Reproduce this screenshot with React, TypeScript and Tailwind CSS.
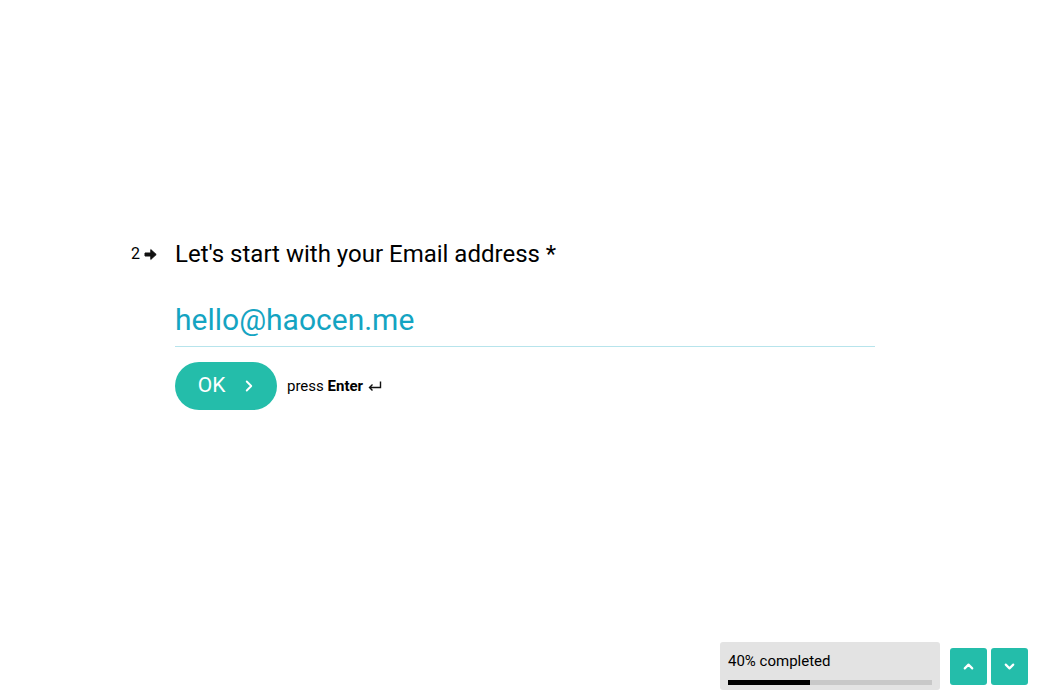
import { ChevronRight, ChevronUp, ChevronDown } from "lucide-react";

const font = { fontFamily: "Roboto, 'Liberation Sans', sans-serif" };

function ArrowRight() {
  return (
    <svg width="13" height="13" viewBox="0 0 13 13" aria-hidden="true">
      <path d="M1 5h5.8V1.6L12.2 6.5l-5.4 4.9V8H1z" fill="#111" stroke="#111" strokeWidth="1" strokeLinejoin="round" />
    </svg>
  );
}

function EnterIcon() {
  return (
    <svg width="14" height="11" viewBox="0 0 14 11" aria-hidden="true" className="ml-[5px]">
      <path d="M12.5 0.5v6H1.5M4.5 3.5l-3 3 3 3" fill="none" stroke="#111" strokeWidth="1.4" />
    </svg>
  );
}

export default function App() {
  return (
    <div className="flex h-[700px] w-full flex-col bg-white text-black" style={font}>
      <main className="flex-1 pl-[131px] pt-[240px]">
        <div className="flex items-center">
          <div className="flex w-[44px] items-center gap-[4px] text-[16px]">
            <span>2</span>
            <ArrowRight />
          </div>
          <h1 className="text-[24px] leading-[28px]">Let's start with your Email address *</h1>
        </div>

        <div className="ml-[44px] mt-[32px] w-[700px]">
          <div className="border-b border-[#b7e4ec] pb-[6px] text-[30px] leading-[40px] text-[#14a4c2]">
            hello@haocen.me
          </div>
          <div className="mt-[15px] flex items-center gap-[10px]">
            <button className="flex h-[48px] w-[102px] items-center justify-center gap-[15px] rounded-full bg-[#24bdaa] pl-[4px] text-[21px] text-white">
              OK
              <ChevronRight size={18} strokeWidth={2.5} />
            </button>
            <span className="flex items-center text-[15px]">
              press&nbsp;<b>Enter</b>
              <EnterIcon />
            </span>
          </div>
        </div>
      </main>

      <footer className="flex items-center justify-end gap-[10px] pb-[10px] pr-[22px]">
        <div className="flex h-[48px] w-[220px] flex-col justify-between rounded-[3px] bg-[#e3e3e3] px-[8px] pb-[5px] pt-[10px]">
          <span className="text-[15px] leading-[18px]">40% completed</span>
          <div className="h-[5px] w-full bg-[#c8c8c8]">
            <div className="h-full bg-black" style={{ width: "40%" }} />
          </div>
        </div>
        <div className="flex gap-[4px]">
          <button className="flex h-[37px] w-[37px] items-center justify-center rounded-[3px] bg-[#24bdaa] text-white">
            <ChevronUp size={15} strokeWidth={3.5} />
          </button>
          <button className="flex h-[37px] w-[37px] items-center justify-center rounded-[3px] bg-[#24bdaa] text-white">
            <ChevronDown size={15} strokeWidth={3.5} />
          </button>
        </div>
      </footer>
    </div>
  );
}
